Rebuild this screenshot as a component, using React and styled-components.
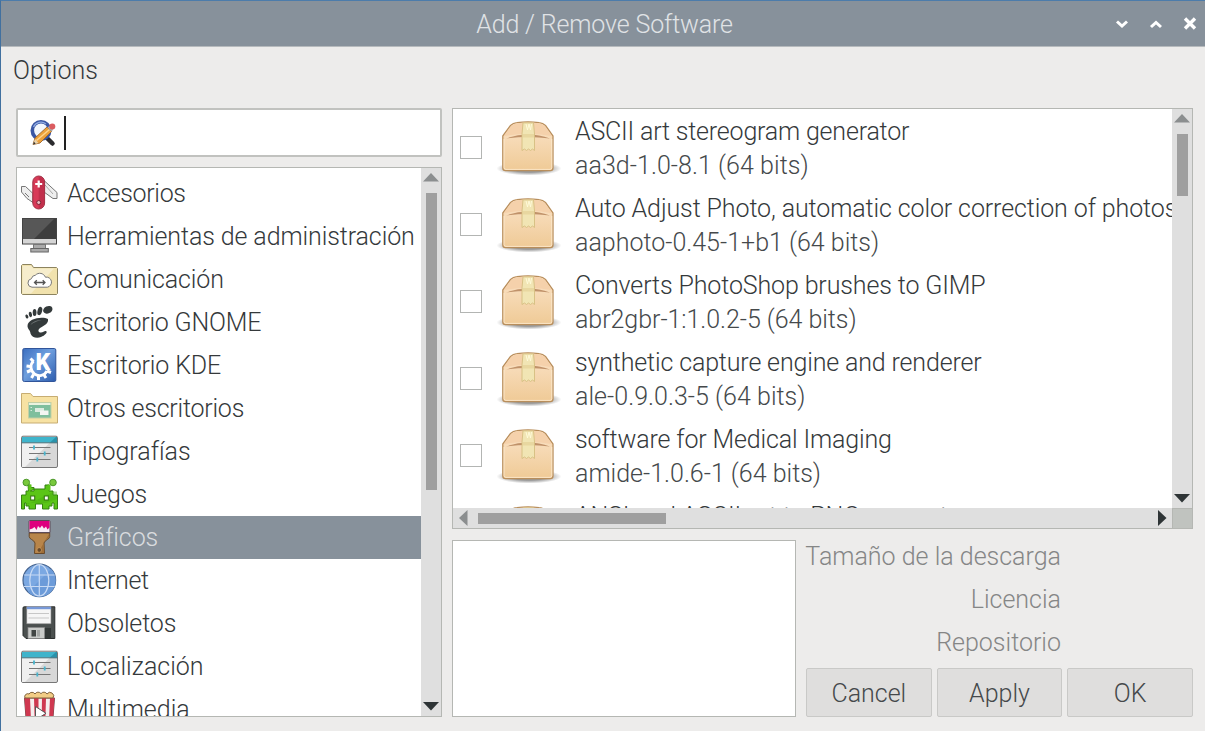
import React from "react";
import styled, { createGlobalStyle } from "styled-components";

const Global = createGlobalStyle`
  *, *::before, *::after { box-sizing: border-box; }
  html, body { margin: 0; padding: 0; overflow: hidden; }
  body { font-family: Roboto, "Liberation Sans", sans-serif; font-weight: 300; font-size: 25px; color: #35393b; }
  svg { display: block; flex: none; }
`;

const Window = styled.div`
  width: 1205px;
  height: 731px;
  display: flex;
  flex-direction: column;
  background: #edeceb;
  border-top: 1px solid #4c7cab;
  border-left: 1px solid #41709f;
  overflow: hidden;
`;

const TitleBar = styled.header`
  height: 46px;
  flex: none;
  display: grid;
  grid-template-columns: 1fr auto 1fr;
  align-items: center;
  background: #87919b;
  border-bottom: 1px solid #b6babd;
  color: #e0e3e6;
`;

const Title = styled.h1`
  grid-column: 2;
  margin: 0;
  padding: 1px 0 0 3px;
  font: inherit;
  line-height: 45px;
  white-space: nowrap;
  letter-spacing: -0.15px;
`;

const WindowButtons = styled.div`
  display: flex;
  justify-content: flex-end;
  gap: 20px;
  padding-right: 8px;
`;

const MenuBar = styled.nav`
  height: 61px;
  flex: none;
  padding: 7px 12px 0;
  line-height: 34px;
`;

const Label = styled.span`
  white-space: nowrap;
  letter-spacing: ${(p) => p.$spacing || 0}px;
`;

const Main = styled.main`
  flex: 1;
  min-height: 0;
  display: grid;
  grid-template-columns: 426px 741px;
  gap: 10px;
  padding: 0 11px 14px 15px;
`;

const Sidebar = styled.div`
  display: flex;
  flex-direction: column;
  gap: 10px;
  min-height: 0;
`;

const SearchField = styled.div`
  height: 49px;
  flex: none;
  display: flex;
  align-items: center;
  padding-left: 11px;
  gap: 7px;
  background: #fff;
  border: 2px solid #c1c2bf;
  border-radius: 2px;
`;

const Caret = styled.i`
  width: 2px;
  height: 34px;
  background: #222;
`;

const Frame = styled.div`
  background: #fff;
  border: 1px solid #b5b7b3;
  min-height: 0;
  min-width: 0;
  overflow: hidden;
`;

const CategoryFrame = styled(Frame)`
  flex: 1;
  display: grid;
  grid-template-columns: 1fr 20px;
`;

const CategoryList = styled.ul`
  margin: 0;
  padding: 4px 0 0;
  list-style: none;
  overflow: hidden;
  min-height: 0;
`;

const CategoryRow = styled.li`
  height: 43px;
  display: flex;
  align-items: center;
  gap: 9px;
  padding-left: 3px;
  background: ${(p) => (p.$selected ? "#87919b" : "transparent")};
  color: ${(p) => (p.$selected ? "#d9dcdf" : "inherit")};
`;

const ScrollBar = styled.div`
  display: flex;
  flex-direction: ${(p) => (p.$horizontal ? "row" : "column")};
  align-items: center;
  justify-content: space-between;
  padding: ${(p) => (p.$horizontal ? "0 5px 0 6px" : "5px 0")};
  background: #dfdfdf;
`;

const ThumbTrack = styled.div`
  flex: 1;
  align-self: stretch;
  display: flex;
  justify-content: ${(p) => (p.$horizontal ? "flex-start" : "center")};
  align-items: ${(p) => (p.$horizontal ? "center" : "flex-start")};
  padding: ${(p) => (p.$horizontal ? "0 0 0 10px" : "11px 0 0")};
`;

const Thumb = styled.div`
  width: ${(p) => p.$w}px;
  height: ${(p) => p.$h}px;
  background: #9f9f9f;
`;

const Content = styled.div`
  display: flex;
  flex-direction: column;
  gap: 11px;
  min-height: 0;
  min-width: 0;
`;

const PackageFrame = styled(Frame)`
  height: 421px;
  flex: none;
  display: grid;
  grid-template-columns: 1fr 20px;
  grid-template-rows: 1fr 20px;
`;

const PackageList = styled.ul`
  margin: 0;
  padding: 1px 0 0;
  list-style: none;
  overflow: hidden;
  min-width: 0;
  min-height: 0;
`;

const PackageRow = styled.li`
  height: 77px;
  display: flex;
  padding-left: 7px;
`;

const CheckBox = styled.span`
  width: 22px;
  height: 23px;
  margin-top: 26px;
  flex: none;
  border: 1px solid #b3b5b3;
  background: #fff;
`;

const PackageIconSlot = styled.div`
  flex: none;
  margin-left: 14px;
`;

const PackageText = styled.div`
  display: flex;
  flex-direction: column;
  padding-top: 5px;
  margin-left: 13px;
  line-height: 34px;
`;

const Version = styled(Label)`
  color: #45494b;
`;

const Corner = styled.div`
  background: #c0c3bf;
  border: 1px solid #b5b7b3;
  border-width: 1px 0 0 1px;
`;

const Details = styled.section`
  flex: 1;
  min-height: 0;
  display: grid;
  grid-template-columns: 344px 387px;
  gap: 10px;
`;

const Info = styled.div`
  display: flex;
  flex-direction: column;
  justify-content: space-between;
`;

const InfoLabels = styled.div`
  width: 255px;
  display: flex;
  flex-direction: column;
  align-items: flex-end;
  line-height: 43px;
  margin-top: -5px;
  color: #858686;
`;

const Buttons = styled.div`
  display: grid;
  grid-template-columns: repeat(3, 1fr);
  gap: 5px;
`;

const Button = styled.button`
  height: 49px;
  padding: 2px 0 0;
  font: inherit;
  color: #45494b;
  background: #dfdedd;
  border: 1px solid #c9c9c7;
  border-radius: 2px;
`;

const Arrow = ({ dir, dark }) => {
  const shapes = {
    up: [16, 9, "0,8.5 8,0 16,8.5"],
    down: [16, 9, "0,0 16,0 8,8.5"],
    left: [9, 16, "8.5,0 8.5,16 0,8"],
    right: [9, 16, "0,0 8.5,8 0,16"],
  };
  const [w, h, points] = shapes[dir];
  return (
    <svg width={w} height={h}>
      <polygon points={points} fill={dark ? "#2e3436" : "#8b8e8f"} />
    </svg>
  );
};

const Icon = ({ children }) => (
  <svg width="38" height="43" viewBox="0 0 38 43">{children}</svg>
);

const KnifeIcon = () => (
  <Icon>
    <path d="M1.5 14.5h4l7.5 7V30.500L7 26.500 1.500 20Z" fill="#eee" stroke="#777" />
    <path d="M8 25l.1.1M5 21l4 4" stroke="#777" fill="none" />
    <path d="M24 8.500 37 20.500V26.500H33L24 20Z" fill="#eee" stroke="#777" />
    <path d="M25 13l8 9" stroke="#aaa" />
    <rect x="12.800" y="4" width="11.800" height="33" rx="5.900" fill="#d83a58" stroke="#9c2f43" />
    <path d="M18.700 5h1a5 5 0 0 1 4.500 5v21a5 5 0 0 1-5.500 5Z" fill="#c12f4c" />
    <path d="M18.700 8.500v7M15.200 12h7" stroke="#fff" strokeWidth="2.200" />
    <circle cx="18.700" cy="30.500" r="2" fill="#e9b9c1" stroke="#7c2334" />
  </Icon>
);

const MonitorIcon = () => (
  <Icon>
    <rect x="2.500" y="3.500" width="34" height="25.500" fill="#575757" stroke="#444" />
    <path d="M36 4v20H14L34 4Z" fill="#3d3d3d" />
    <rect x="3" y="24" width="33" height="4.500" fill="#d5d5d5" />
    <rect x="13.500" y="29.500" width="12" height="4" fill="#aaa" stroke="#777" />
    <rect x="10.800" y="33.500" width="17.500" height="3.500" fill="#aaa" stroke="#666" />
  </Icon>
);

const CommunicationIcon = () => (
  <Icon>
    <path d="M1.500 7.500 2.500 6.500h9l2 3H36.500l1 1V35.500l-1 1H2.500l-1-1Z" fill="#f1e2ad" stroke="#8c835f" />
    <path d="M2.500 8h9l1.500 2.500H34L11 35.500H2.500Z" fill="#f6edcc" />
    <path d="M12 29.200a4.300 4.300 0 0 1-.6-8.500 4.500 4.500 0 0 1 4-3.500 6 6 0 0 1 10 2 5 5 0 0 1 2 10Z" fill="#fff" stroke="#777" />
    <path d="M15 24.500h9.500M16.800 22.200 14.500 24.500l2.300 2.300M22.700 22.200l2.300 2.300-2.300 2.300" fill="none" stroke="#555" strokeWidth="1.300" />
  </Icon>
);

const FootIcon = () => (
  <Icon>
    <g fill="#343a3b">
      <ellipse cx="27.800" cy="8.800" rx="4.900" ry="3.600" transform="rotate(-25 27.800 8.800)" />
      <ellipse cx="19.800" cy="10" rx="2.300" ry="4.200" transform="rotate(15 19.800 10)" />
      <ellipse cx="14.600" cy="11.500" rx="1.900" ry="3.500" />
      <ellipse cx="10.400" cy="13.500" rx="1.600" ry="2.800" transform="rotate(-12 10.400 13.500)" />
      <ellipse cx="6.900" cy="15.500" rx="1.400" ry="2.100" transform="rotate(-20 6.900 15.500)" />
      <path d="M28 18C23 15 7.500 17 7.500 25c0 3 3 4.500 3 7.500 1 4 6.500 5 10.500 3.500 4-1.500 6.500-4.500 5.500-5.500-1.500-1.500-3 1-5.500 1s-3.500-2-1.500-4 9.500-4 8.500-9.500Z" />
    </g>
    <path d="M10.500 24c2-3.500 6-5 11-5-4 1-8 2.500-11 5Z" fill="#6b7172" />
  </Icon>
);

const KdeIcon = () => (
  <Icon>
    <defs>
      <linearGradient id="kde" x1="0" y1="0" x2="1" y2="1">
        <stop offset="0" stopColor="#3a6ec0" />
        <stop offset=".45" stopColor="#6f9fde" />
        <stop offset="1" stopColor="#2c5cae" />
      </linearGradient>
    </defs>
    <rect x="2.800" y="4.500" width="33" height="33" rx="1.500" fill="url(#kde)" stroke="#31559a" />
    <path d="M13.500 17A8.500 8.500 0 1 0 27 27" fill="none" stroke="#fff" strokeWidth="2.800" />
    <path d="M13.500 17.500l-3-3M10.500 22.500l-4-.5M10.500 26.500l-3.500 1.500M13.500 30.500l-2 3.500M18.500 31.500v4.500M24 31l2 3M27 27l4 1.500" stroke="#fff" strokeWidth="3" />
    <text x="15.500" y="25.500" fontFamily="Roboto" fontWeight="900" fontSize="23" fill="#fff">K</text>
  </Icon>
);

const DesktopFolderIcon = () => (
  <Icon>
    <path d="M1.500 6.500h9l2.500 3H37.500V36H1.500Z" fill="#f7e2a3" stroke="#c7ad72" />
    <rect x="8.500" y="15.500" width="22.500" height="15.500" fill="#7fbf9d" stroke="#c3cfa5" />
    <path d="M9 16h21.500v2H9Z" fill="#eaf3df" />
    <path d="M15 21h9v4H15Z" fill="#dcebe0" />
    <path d="M20 23.500h8.500v4.500H20Z" fill="#f3f6f2" />
    <path d="M10.500 20.500h1.500M10.500 23.500h1.500" stroke="#d5eadb" />
  </Icon>
);

const SettingsIcon = () => (
  <Icon>
    <rect x="1.500" y="6.200" width="36" height="31.300" rx="1.500" fill="#d8d8d8" stroke="#777" />
    <path d="M2 12.500h28L5 37H2Z" fill="#f0f0f0" />
    <path d="M2 12.500V7h35v5.500Z" fill="#3fb4cb" />
    <path d="M30 12.500 36 7h1v5.500Z" fill="#2a92aa" />
    <path d="M1.500 12.800h36" stroke="#416f7b" />
    <path d="M9 17.500h21.500M9 23.500h21.500M9 29.500h21.500" stroke="#777" strokeWidth="1.200" />
    <path d="M14 15.500v4M24.700 21.500v4M17.300 27.500v4" stroke="#48b4cd" strokeWidth="1.800" />
  </Icon>
);

const InvaderIcon = () => (
  <Icon>
    <path d="M8 12h2.500v6H14v-3.500h-3.500V18l3.500-2h11v-4h4v6h4v4h4.500v14H34v-6h-2v3h-3v3h-6.500v-5h-7v5H9v-3H6v-3H4.500v6H1.500V22H6v-4h2.500Z" fill="#5bc517" stroke="#358110" />
    <path d="M8.500 11.500h3v6h-3zM27.500 11.500h3v6h-3z" fill="#5bc517" />
    <circle cx="6.300" cy="9.500" r="3.300" fill="#78c93c" stroke="#4c972b" />
    <circle cx="33" cy="9.500" r="3.300" fill="#78c93c" stroke="#4c972b" />
    <path d="M2 34 34 18.500H37V26L26 30H8Z" fill="#46aa10" opacity=".4" />
    <rect x="10.700" y="23" width="4" height="4" fill="#fff" stroke="#32720f" />
    <rect x="24.300" y="23" width="4" height="4" fill="#fff" stroke="#32720f" />
  </Icon>
);

const BrushIcon = () => (
  <Icon>
    <path d="M9.200 17H29.700V20.500C29.700 23.500 25 23.500 24 27L24.500 37.500H14.500L15 27C14 23.500 9.200 23.500 9.200 20.500Z" fill="#b8854a" stroke="#68492a" />
    <path d="M29.200 17.500v3c0 2.500-4.700 3-5.700 6.500l.5 10H18Z" fill="#9f6e38" />
    <path d="M9 5.500q0-1 1-1H29q1 0 1 1V16.500H9Z" fill="#f7edf3" stroke="#5d4a56" />
    <path d="M9.500 5H29.500V11.500L27.500 13.500 26 10.500 24 12.500 22 9.500 20 12 18 10 16.500 14 14.500 11 12.500 12.500 9.500 13.500Z" fill="#de007e" />
    <circle cx="19.300" cy="34" r="2.300" fill="#68492a" stroke="#d3a56a" strokeWidth=".6" />
  </Icon>
);

const GlobeIcon = () => (
  <Icon>
    <circle cx="19.300" cy="21.300" r="16.300" fill="#7ba8e2" stroke="#46648f" strokeWidth="1.200" />
    <path d="M31 10A16 16 0 0 1 8 33Z" fill="#6c9bd9" />
    <path d="M19.300 5.500v31.600M4 16h30.600M4 27.500h30.600" stroke="#c8daf4" strokeWidth="1.200" />
    <ellipse cx="19.300" cy="21.300" rx="9.500" ry="15.700" fill="none" stroke="#c8daf4" strokeWidth="1.200" />
  </Icon>
);

const FloppyIcon = () => (
  <Icon>
    <path d="M3 6Q3 4.800 4.200 4.800H34.800V36.500H6L3 33.500Z" fill="#4b504f" stroke="#292c2c" />
    <rect x="6.800" y="4.500" width="24.200" height="17.300" fill="#f6f6f6" stroke="#888" strokeWidth=".6" />
    <path d="M6.800 4.800h24.200v2.400H6.800Z" fill="#7899d8" />
    <path d="M8.500 11.500h20.500M8.500 16h20.500" stroke="#c7c7c7" />
    <rect x="8" y="25.500" width="16.500" height="11" fill="#c9cbc9" stroke="#888" strokeWidth=".7" />
    <rect x="11.500" y="28" width="4.500" height="6.500" fill="#414644" />
    <path d="M17 28h3v6.500h-3Z" fill="#a3a6a4" />
    <path d="M25 26v10.500h6V26Z" fill="#333837" />
  </Icon>
);

const PopcornIcon = () => (
  <Icon>
    <path d="M4.500 10 7 43H32L34.500 10Z" fill="#f6eeee" stroke="#6e4a4a" />
    <path d="M4.500 10h5.500L11.500 43H7ZM14 10h4.500V43h-3.500ZM22 10h4l-1 33h-3.500ZM30 10h4.500L32 43h-3.500Z" fill="#cf3850" />
    <path d="M5 10a3 3 0 0 1 4-4 3.500 3.500 0 0 1 6 0 3.500 3.500 0 0 1 6-.3 3.500 3.500 0 0 1 6 .3 3.300 3.300 0 0 1 6 4Z" fill="#f2cd86" stroke="#80633c" />
    <path d="M15.500 18.500 26 25.300 15.500 32Z" fill="#fff" stroke="#555" />
  </Icon>
);

const SearchIcon = () => (
  <svg width="28" height="28" viewBox="0 0 28 28">
    <path d="m16 17 7.500 7.500" stroke="#2b2b2e" strokeWidth="4.500" strokeLinecap="round" />
    <circle cx="12" cy="11.500" r="8.700" fill="#f2f7fd" stroke="#3b57a4" strokeWidth="3.600" />
    <path d="M4.500 8A8 8 0 0 1 17 5" fill="none" stroke="#8fabe3" strokeWidth="1.300" />
    <path d="m4 25.500 2-6.500L18 8l4.500 4.500L11 24Z" fill="#eda13b" stroke="#9c642a" strokeWidth=".9" />
    <path d="m7.500 21.500 13-11" stroke="#ffd58d" strokeWidth="1.500" />
    <path d="m4 25.500 2-5.500 3.500 4Z" fill="#e9d2aa" />
    <path d="m4 25.500 1-2.700 1.700 1.900Z" fill="#333" />
    <path d="m18.500 8.500 2-1.700 3.700 4-1.900 1.700Z" fill="#aaa" />
    <circle cx="23.300" cy="7.500" r="3" fill="#db5c60" />
  </svg>
);

const PackageIcon = () => (
  <svg width="66" height="77" viewBox="0 0 66 77">
    <defs>
      <linearGradient id="boxFront" x1="0" y1="0" x2="0" y2="1">
        <stop offset="0" stopColor="#fbe3c8" />
        <stop offset="1" stopColor="#efca96" />
      </linearGradient>
      <radialGradient id="boxShadow">
        <stop offset=".55" stopColor="#000" stopOpacity=".4" />
        <stop offset="1" stopColor="#000" stopOpacity="0" />
      </radialGradient>
    </defs>
    <ellipse cx="33" cy="58.500" rx="32.500" ry="7" fill="url(#boxShadow)" />
    <path d="M6.800 26 14.500 15.500Q17 13 21 12.600Q32 11 43 12.600Q47 13 49.500 15.500L57 26V58Q57 60.600 54.300 60.600H9.500Q6.800 60.600 6.800 58Z" fill="url(#boxFront)" stroke="#b88e5c" strokeWidth="1.300" />
    <path d="M7.500 26.300 15 16Q17.500 13.600 21 13.200Q32 11.700 43 13.200Q46.500 13.600 49 16L56.300 26.300Q45 24 32 24T7.500 26.300Z" fill="#f5d1ab" />
    <path d="M10 28.500Q32 20.500 54 28.500Q32 25.500 10 28.500Z" fill="#c0926a" />
    <path d="M8 29V57.500Q8 59.400 10 59.400H54Q55.800 59.400 55.800 57.500V29" fill="none" stroke="#fff0da" strokeOpacity=".7" />
    <path d="M27 12.800h10.500L38.500 24V40.500l-2-1.500-2 1.500-2-1.500-2 1.500-2-1.500-2.500 1.500V24Z" fill="#f1e5b4" stroke="#d5bd80" strokeWidth=".9" />
    <path d="M26.500 24h11.500v3.500h-11.500Z" fill="#dec588" opacity=".45" />
    <path d="m30 14 1.500 6 1.500-6 1.500 6 1-6" fill="none" stroke="#fffad9" />
  </svg>
);

const categories = [
  ["Accesorios", KnifeIcon, -0.3],
  ["Herramientas de administración", MonitorIcon, -0.1],
  ["Comunicación", CommunicationIcon, -0.1],
  ["Escritorio GNOME", FootIcon, -0.2],
  ["Escritorio KDE", KdeIcon, -0.15],
  ["Otros escritorios", DesktopFolderIcon, -0.23],
  ["Tipografías", SettingsIcon, 0],
  ["Juegos", InvaderIcon, -0.15],
  ["Gráficos", BrushIcon, -0.1],
  ["Internet", GlobeIcon, -0.35],
  ["Obsoletos", FloppyIcon, -0.15],
  ["Localización", SettingsIcon, 0],
  ["Multimedia", PopcornIcon, 0],
];

const packages = [
  ["ASCII art stereogram generator", -0.19, "aa3d-1.0-8.1 (64 bits)", 0.05],
  ["Auto Adjust Photo, automatic color correction of photos", -0.11, "aaphoto-0.45-1+b1 (64 bits)", 0],
  ["Converts PhotoShop brushes to GIMP", -0.13, "abr2gbr-1:1.0.2-5 (64 bits)", -0.05],
  ["synthetic capture engine and renderer", -0.15, "ale-0.9.0.3-5 (64 bits)", 0.03],
  ["software for Medical Imaging", -0.14, "amide-1.0.6-1 (64 bits)", 0],
  ["ANSI and ASCII art to PNG converter", -0.15, "", 0],
];

export default function App() {
  return (
    <>
      <Global />
      <Window>
        <TitleBar>
          <Title>Add / Remove Software</Title>
          <WindowButtons>
            <svg width="14" height="14"><path d="m2 4.500 5 4.500 5-4.500" fill="none" stroke="#fff" strokeWidth="3" /></svg>
            <svg width="14" height="14"><path d="m2 10 5-4.500 5 4.500" fill="none" stroke="#fff" strokeWidth="3" /></svg>
            <svg width="14" height="14"><path d="m2 1.500 10 10M12 1.500 2 11.500" fill="none" stroke="#fff" strokeWidth="3.400" /></svg>
          </WindowButtons>
        </TitleBar>
        <MenuBar><Label>Options</Label></MenuBar>
        <Main>
          <Sidebar>
            <SearchField><SearchIcon /><Caret /></SearchField>
            <CategoryFrame>
              <CategoryList>
                {categories.map(([name, Glyph, spacing]) => (
                  <CategoryRow key={name} $selected={name === "Gráficos"}>
                    <Glyph />
                    <Label $spacing={spacing}>{name}</Label>
                  </CategoryRow>
                ))}
              </CategoryList>
              <ScrollBar>
                <Arrow dir="up" />
                <ThumbTrack><Thumb $w={11} $h={297} /></ThumbTrack>
                <Arrow dir="down" dark />
              </ScrollBar>
            </CategoryFrame>
          </Sidebar>
          <Content>
            <PackageFrame>
              <PackageList>
                {packages.map(([name, nameSpacing, version, versionSpacing]) => (
                  <PackageRow key={name}>
                    <CheckBox />
                    <PackageIconSlot><PackageIcon /></PackageIconSlot>
                    <PackageText>
                      <Label $spacing={nameSpacing}>{name}</Label>
                      <Version $spacing={versionSpacing}>{version}</Version>
                    </PackageText>
                  </PackageRow>
                ))}
              </PackageList>
              <ScrollBar>
                <Arrow dir="up" />
                <ThumbTrack><Thumb $w={11} $h={62} /></ThumbTrack>
                <Arrow dir="down" dark />
              </ScrollBar>
              <ScrollBar $horizontal>
                <Arrow dir="left" />
                <ThumbTrack $horizontal><Thumb $w={188} $h={11} /></ThumbTrack>
                <Arrow dir="right" dark />
              </ScrollBar>
              <Corner />
            </PackageFrame>
            <Details>
              <Frame />
              <Info>
                <InfoLabels>
                  <Label>Tamaño de la descarga</Label>
                  <Label>Licencia</Label>
                  <Label>Repositorio</Label>
                </InfoLabels>
                <Buttons>
                  <Button>Cancel</Button>
                  <Button>Apply</Button>
                  <Button>OK</Button>
                </Buttons>
              </Info>
            </Details>
          </Content>
        </Main>
      </Window>
    </>
  );
}
